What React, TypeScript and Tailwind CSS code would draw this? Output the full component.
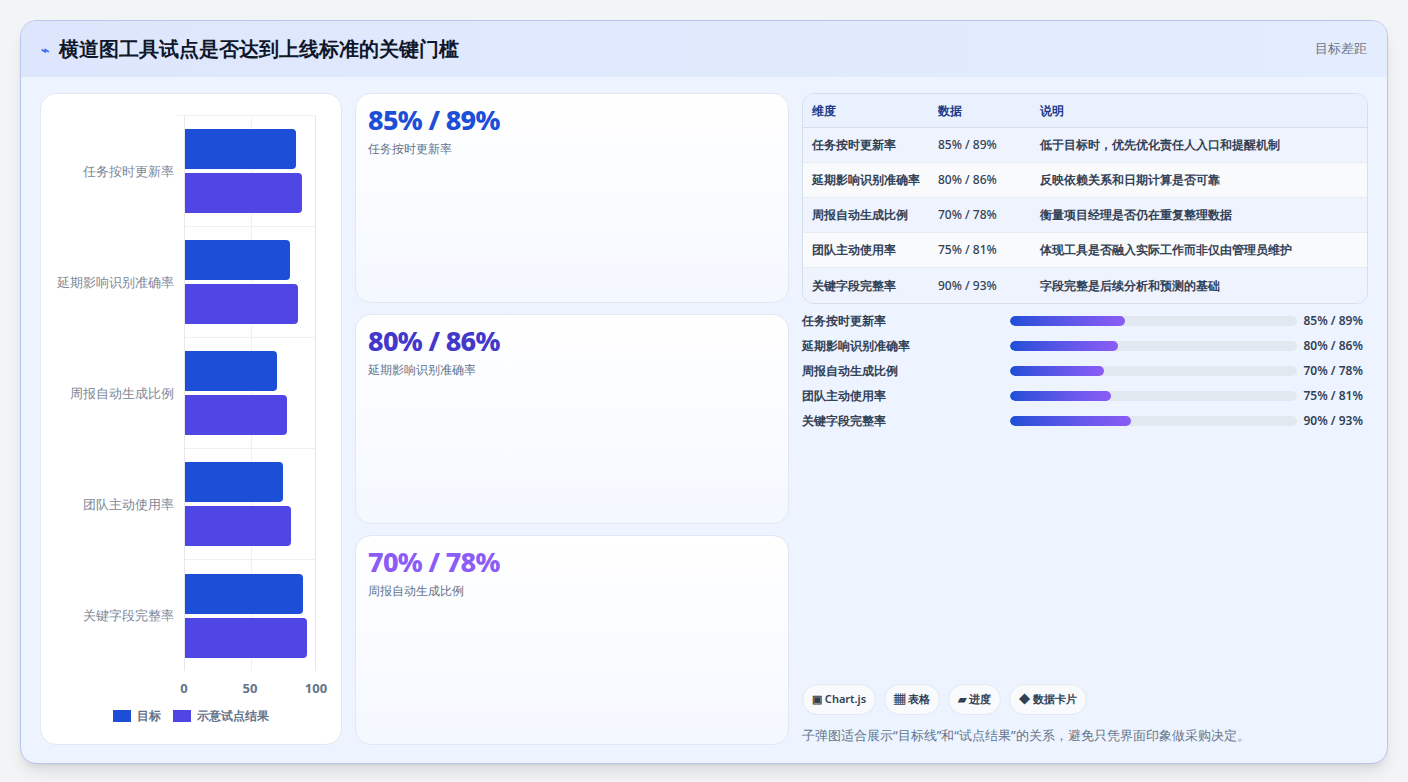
const rows = [
  { name: "任务按时更新率", t: 85, p: 89, note: "低于目标时，优先优化责任人入口和提醒机制" },
  { name: "延期影响识别准确率", t: 80, p: 86, note: "反映依赖关系和日期计算是否可靠" },
  { name: "周报自动生成比例", t: 70, p: 78, note: "衡量项目经理是否仍在重复整理数据" },
  { name: "团队主动使用率", t: 75, p: 81, note: "体现工具是否融入实际工作而非仅由管理员维护" },
  { name: "关键字段完整率", t: 90, p: 93, note: "字段完整是后续分析和预测的基础" },
];

const cards = [
  { v: "85% / 89%", l: "任务按时更新率", c: "text-[#1d4ed8]" },
  { v: "80% / 86%", l: "延期影响识别准确率", c: "text-[#4338ca]" },
  { v: "70% / 78%", l: "周报自动生成比例", c: "text-[#8b5cf6]" },
];

function Chart() {
  return (
    <div className="w-[302px] shrink-0 rounded-2xl border border-[#e2e8f0] bg-white pt-[22px] pb-4 flex flex-col">
      <div className="flex">
        <div className="w-[143px] shrink-0 flex flex-col">
          {rows.map((r) => (
            <div key={r.name} className="h-[111px] flex items-center justify-end pr-[10px] text-[13px] text-[#7c8798]">
              {r.name}
            </div>
          ))}
        </div>
        <div className="relative w-[132px] border-l border-[#e5e7eb]">
          <div className="absolute inset-y-0 left-[66px] w-px bg-[#eef0f3]" />
          <div className="absolute inset-y-0 right-0 w-px bg-[#e5e7eb]" />
          <div className="absolute -top-px -left-2 right-0 h-px bg-[#eef0f3]" />
          {rows.map((r, i) => (
            <div key={r.name} className={"relative h-[111px] flex flex-col justify-center gap-1 " + (i < 4 ? "border-b border-[#eef0f3]" : "")}>
              <div className="h-10 rounded-r bg-[#1d4ed8]" style={{ width: `${r.t}%` }} />
              <div className="h-10 rounded-r bg-[#4f46e5]" style={{ width: `${r.p}%` }} />
            </div>
          ))}
        </div>
      </div>
      <div className="ml-[143px] w-[132px] relative h-[28px] text-[13px] font-bold text-[#64748b]">
        <span className="absolute left-0 top-[8px] -translate-x-1/2">0</span>
        <span className="absolute left-[66px] top-[8px] -translate-x-1/2">50</span>
        <span className="absolute left-[132px] top-[8px] -translate-x-1/2">100</span>
      </div>
      <div className="mt-2 flex justify-center gap-3 text-[12px] font-bold text-[#64748b]">
        <span className="flex items-center gap-1.5"><span className="w-[18px] h-[12px] bg-[#1d4ed8]" />目标</span>
        <span className="flex items-center gap-1.5"><span className="w-[18px] h-[12px] bg-[#4f46e5]" />示意试点结果</span>
      </div>
    </div>
  );
}

export default function App() {
  return (
    <div className="w-[1408px] h-[782px] bg-[#f3f4f6] p-5 pb-[18px] font-['Inter','Noto_Sans_CJK_SC',sans-serif]">
      <div className="h-full rounded-2xl border border-[#b8c6ec] bg-[#edf4ff] overflow-hidden flex flex-col shadow-lg">
        <div className="h-[56px] shrink-0 flex items-center justify-between px-5 bg-gradient-to-r from-[#dde6fc] to-[#e4edfd]">
          <div className="flex items-center gap-2.5">
            <span className="text-[#3b6ff0] text-[14px] font-bold">⌁</span>
            <span className="text-[20px] font-bold text-[#0f172a]">横道图工具试点是否达到上线标准的关键门槛</span>
          </div>
          <span className="text-[13px] text-[#64748b]">目标差距</span>
        </div>
        <div className="flex-1 flex gap-[13px] px-[19px] pt-4 pb-[18px]">
          <Chart />
          <div className="w-[434px] shrink-0 flex flex-col gap-[11px]">
            {cards.map((c) => (
              <div key={c.v} className="flex-1 rounded-2xl border border-[#e2e8f0] bg-gradient-to-b from-white to-[#f4f8ff] px-3 pt-[9px]">
                <div className={"text-[27px] font-extrabold leading-[34px] tracking-tight " + c.c}>{c.v}</div>
                <div className="text-[12px] text-[#64748b] mt-[3px]">{c.l}</div>
              </div>
            ))}
          </div>
          <div className="flex-1 flex flex-col">
            <div className="rounded-xl border border-[#d6deea] overflow-hidden text-[12px] font-semibold text-[#334155]">
              <div className="flex h-[34px] items-center bg-[#eaf1fe] text-[#1e3a8a] border-b border-[#d6deea] font-bold">
                <span className="w-[135px] pl-[9px]">维度</span>
                <span className="w-[102px]">数据</span>
                <span>说明</span>
              </div>
              {rows.map((r, i) => (
                <div key={r.name} className={"flex h-[35px] items-center " + (i % 2 ? "bg-[#f8fafc]" : "bg-[#eef3fd]") + (i < 4 ? " border-b border-[#e7ecf3]" : "")}>
                  <span className="w-[135px] pl-[9px]">{r.name}</span>
                  <span className="w-[102px] font-medium">{r.t}% / {r.p}%</span>
                  <span>{r.note}</span>
                </div>
              ))}
            </div>
            <div className="mt-[8px] flex flex-col gap-[7px] text-[12px] font-semibold text-[#334155] pr-[5px]">
              {rows.map((r) => (
                <div key={r.name} className="flex items-center h-[18px]">
                  <span className="w-[208px]">{r.name}</span>
                  <div className="flex-1 h-[10px] rounded-full bg-[#e2e8f0] overflow-hidden">
                    <div className="h-full rounded-full bg-gradient-to-r from-[#1d4ed8] to-[#8b5cf6]" style={{ width: `${r.t * 0.47}%` }} />
                  </div>
                  <span className="w-[66px] text-right">{r.t}% / {r.p}%</span>
                </div>
              ))}
            </div>
            <div className="mt-auto flex gap-2 text-[11px] font-semibold text-[#334155]">
              <span className="rounded-full border border-[#e2e8f0] bg-[#f8fafc] px-[9px] py-[6px]">▣ Chart.js</span>
              <span className="rounded-full border border-[#e2e8f0] bg-[#f8fafc] px-[9px] py-[6px]">▦ 表格</span>
              <span className="rounded-full border border-[#e2e8f0] bg-[#f8fafc] px-[9px] py-[6px]">▰ 进度</span>
              <span className="rounded-full border border-[#e2e8f0] bg-[#f8fafc] px-[9px] py-[6px]">◆ 数据卡片</span>
            </div>
            <div className="mt-[11px] text-[13px] text-[#64748b]">子弹图适合展示“目标线”和“试点结果”的关系，避免只凭界面印象做采购决定。</div>
          </div>
        </div>
      </div>
    </div>
  );
}
